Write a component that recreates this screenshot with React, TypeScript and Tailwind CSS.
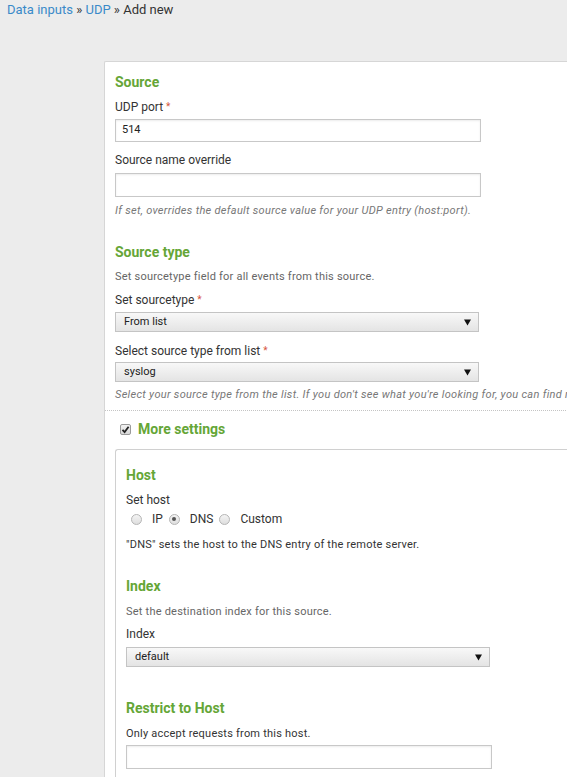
import React from "react"

// Small building blocks
function Heading({ children, className = "" }: { children: React.ReactNode; className?: string }) {
    return <h2 className={`text-[14px] leading-[17px] font-bold text-[#65a637] ${className}`}>{children}</h2>
}

function Label({ children, required, className = "" }: { children: React.ReactNode; required?: boolean; className?: string }) {
    return (
        <div className={`text-[12px] leading-[16px] text-[#333] ${className}`}>
            {children}
            {required && <span className="text-[#d6563c] text-[10px] ml-[3px] align-top">*</span>}
        </div>
    )
}

function Help({ children, className = "" }: { children: React.ReactNode; className?: string }) {
    return <p className={`text-[11px] leading-[14px] italic tracking-[0.3px] text-[#777] whitespace-nowrap ${className}`}>{children}</p>
}

function Desc({ children, className = "" }: { children: React.ReactNode; className?: string }) {
    return <p className={`text-[11px] leading-[14px] tracking-[0.22px] text-[#666] whitespace-nowrap ${className}`}>{children}</p>
}

function TextInput({ value = "", className = "" }: { value?: string; className?: string }) {
    return (
        <div className={`h-[23px] border border-[#c8c8c8] bg-white shadow-[inset_0_1px_2px_rgba(0,0,0,0.08)] flex items-center pl-[6px] text-[11px] text-[#222] ${className}`}>
            {value}
        </div>
    )
}

function Select({ value, className = "" }: { value: string; className?: string }) {
    return (
        <div className={`h-[20px] border border-[#c4c4c4] bg-gradient-to-b from-[#f8f8f8] to-[#e4e4e4] flex items-center justify-between pl-[8px] pr-[7px] text-[11px] text-[#222] ${className}`}>
            <span>{value}</span>
            <svg width="7" height="7" viewBox="0 0 7 7">
                <path d="M0 0.5 L7 0.5 L3.5 6.5 Z" fill="#111" />
            </svg>
        </div>
    )
}

function Radio({ checked, label }: { checked?: boolean; label: string }) {
    return (
        <span className="flex items-center">
            <span className="w-[11px] h-[11px] rounded-full border border-[#b5b5b5] bg-gradient-to-b from-[#f4f4f4] to-[#dedede] flex items-center justify-center">
                {checked && <span className="w-[4px] h-[4px] rounded-full bg-[#555]" />}
            </span>
            <span className="ml-[10px] text-[12px] text-[#333]">{label}</span>
        </span>
    )
}

export default function App() {
    return (
        <div className="w-screen h-[777px] overflow-hidden bg-[#ececec] font-['Roboto',sans-serif]">
            {/* Breadcrumb */}
            <div className="pl-[7px] pt-[2px] text-[13px] leading-[16px] text-[#333]">
                <span className="text-[#3a8ac9]">Data inputs</span> » <span className="text-[#3a8ac9]">UDP</span> » Add new
            </div>

            {/* Main form panel */}
            <div className="mt-[43px] ml-[104px] w-[600px] bg-white border-l border-t border-[#d6d6d6] rounded-tl-[2px] pt-[12px]">
                <div className="pl-[10px]">
                    <Heading>Source</Heading>
                    <Label required className="mt-[8px]">UDP port</Label>
                    <TextInput value="514" className="mt-[4px] w-[366px]" />
                    <Label className="mt-[10px]">Source name override</Label>
                    <TextInput className="mt-[5px] w-[366px] h-[24px]" />
                    <Help className="mt-[7px]">If set, overrides the default source value for your UDP entry (host:port).</Help>

                    <Heading className="mt-[26px]">Source type</Heading>
                    <Desc className="mt-[9px]">Set sourcetype field for all events from this source.</Desc>
                    <Label required className="mt-[8px]">Set sourcetype</Label>
                    <Select value="From list" className="mt-[4px] w-[364px]" />
                    <Label required className="mt-[11px]">Select source type from list</Label>
                    <Select value="syslog" className="mt-[3px] w-[364px]" />
                    <Help className="mt-[6px]">
                        Select your source type from the list. If you don't see what you're looking for, you can find more source types in the SplunkBase apps browser.
                    </Help>
                </div>

                {/* Dotted separator */}
                <div className="mt-[8px] border-t border-dotted border-[#c4c4c4]" />

                <div className="pl-[10px]">
                    {/* More settings toggle */}
                    <div className="mt-[10px] flex items-center">
                        <span className="ml-[5px] w-[11px] h-[11px] border border-[#9a9a9a] rounded-[2px] bg-gradient-to-b from-[#f2f2f2] to-[#d8d8d8] flex items-center justify-center">
                            <svg width="9" height="9" viewBox="0 0 9 9">
                                <path d="M1.5 4.8 L3.6 7 L7.6 1.8" stroke="#222" strokeWidth="1.8" fill="none" />
                            </svg>
                        </span>
                        <span className="ml-[7px] text-[14px] leading-[17px] font-bold text-[#65a637]">More settings</span>
                    </div>

                    {/* Nested settings panel */}
                    <div className="mt-[11px] border-l border-t border-[#d0d0d0] rounded-tl-[3px] pt-[17px] pl-[10px] pb-[20px]">
                        <Heading>Host</Heading>
                        <Label className="mt-[8px]">Set host</Label>
                        <div className="mt-[3px] h-[16px] flex items-center gap-[6px] pl-[5px]">
                            <Radio label="IP" />
                            <Radio checked label="DNS" />
                            <Radio label="Custom" />
                        </div>
                        <p className="mt-[11px] text-[11px] leading-[14px] tracking-[0.22px] text-[#333]">"DNS" sets the host to the DNS entry of the remote server.</p>

                        <Heading className="mt-[26px]">Index</Heading>
                        <Desc className="mt-[10px]">Set the destination index for this source.</Desc>
                        <Label className="mt-[7px]">Index</Label>
                        <Select value="default" className="mt-[5px] w-[364px] h-[19px]" />

                        <Heading className="mt-[33px]">Restrict to Host</Heading>
                        <p className="mt-[10px] text-[11px] leading-[14px] tracking-[0.22px] text-[#333]">Only accept requests from this host.</p>
                        <TextInput className="mt-[4px] w-[366px] h-[24px]" />
                    </div>
                </div>
            </div>
        </div>
    )
}
